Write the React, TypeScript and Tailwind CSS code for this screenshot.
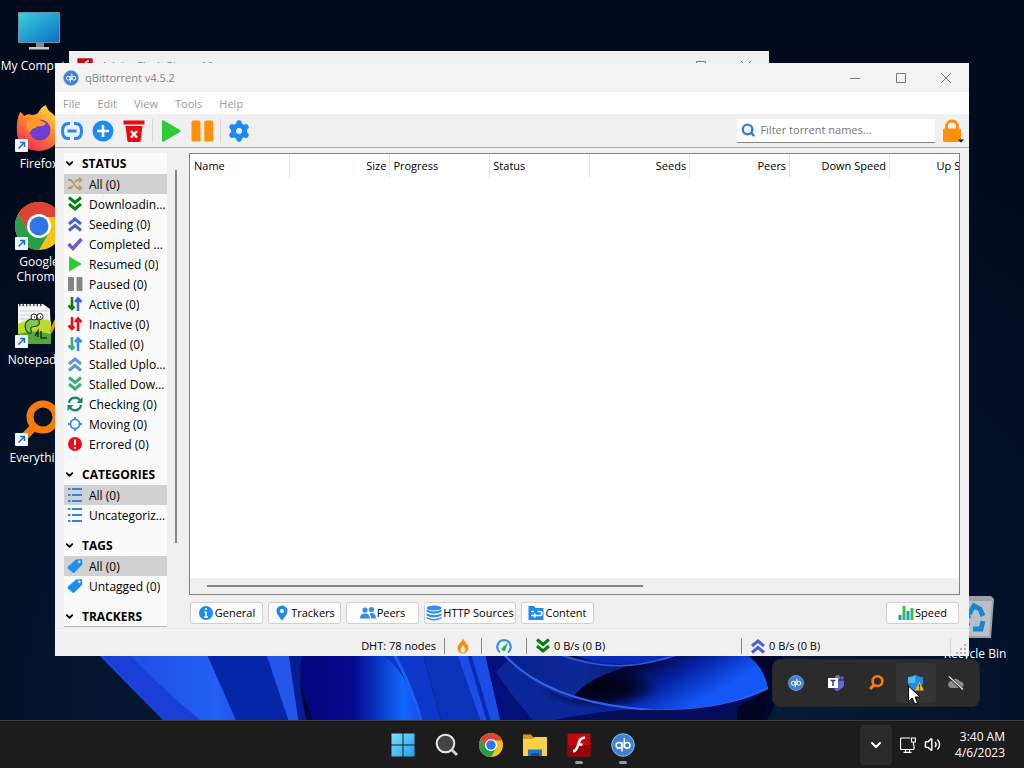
import type { ReactNode } from 'react';
import { ChevronDown, Search, Volume2 } from 'lucide-react';

interface IconProps {
  className?: string;
}

function ChevronsIcon({ className, up = false }: IconProps & { up?: boolean }) {
  return (
    <svg viewBox="0 0 16 16" className={className} fill="none" stroke="currentColor" strokeWidth="3">
      {up ? <path d="M2 8 8 3l6 5M2 14.500 8 9.500l6 5" /> : <path d="M2 1.500l6 5 6-5M2 8l6 5 6-5" />}
    </svg>
  );
}

function ArrowsIcon({ down, up }: { down: string; up: string }) {
  return (
    <svg viewBox="0 0 16 16" className="size-4" fill="none" strokeWidth="2.600">
      <path d="M5 1v12M1.500 9.500 5 13l2.500-2.500" className={down} />
      <path d="M11 15V3M8 6l3-3.500L14.500 6" className={up} />
    </svg>
  );
}

function ShuffleIcon() {
  return (
    <svg viewBox="0 0 16 16" className="size-4" fill="none" stroke="#bf9a62" strokeWidth="1.800">
      <path d="M1 4h3l6 8h4M1 12h3l2-2.500M8 6.500 10 4h4M12 1.500 14.500 4 12 6.500M12 9.500l2.500 2.500L12 14.500" />
    </svg>
  );
}

function CheckIcon() {
  return (
    <svg viewBox="0 0 16 16" className="size-4" fill="none" stroke="#7b55c7" strokeWidth="3.400">
      <path d="m1.500 8 4.500 4.500L14.500 3" />
    </svg>
  );
}

function PlayIcon({ className }: IconProps) {
  return (
    <svg viewBox="0 0 16 16" className={className} fill="#2fcb37">
      <path d="M2 1.500q0-1 1-.6l11 6.500q1 .6 0 1.200L3 15.100q-1 .4-1-.6z" />
    </svg>
  );
}

function PauseIcon({ className }: IconProps) {
  return (
    <svg viewBox="0 0 16 16" className={className} fill="currentColor">
      <rect x="1" y="1" width="6" height="14" rx="1" />
      <rect x="9.500" y="1" width="6" height="14" rx="1" />
    </svg>
  );
}

function RefreshIcon() {
  return (
    <svg viewBox="0 0 16 16" className="size-4" fill="none" stroke="#12876b" strokeWidth="2.200">
      <path d="M2 7a6 6 0 0 1 11-2.500M14 9a6 6 0 0 1-11 2.500" />
      <path d="M15.500 1v6h-6zM.5 15V9h6z" fill="#12876b" stroke="none" />
    </svg>
  );
}

function MovingIcon() {
  return (
    <svg viewBox="0 0 16 16" className="size-4" fill="none" stroke="#3b8ee0" strokeWidth="1.800">
      <circle cx="8" cy="8" r="4.600" />
      <path d="M8 1v3M8 12v3M1 8h3M12 8h3" />
    </svg>
  );
}

function ErrorIcon() {
  return (
    <svg viewBox="0 0 16 16" className="size-4">
      <circle cx="8" cy="8" r="7" fill="#ee0d14" />
      <path d="M8 3.500v5.500M8 10.700v2" stroke="white" strokeWidth="2" />
    </svg>
  );
}

function ListIcon() {
  return (
    <svg viewBox="0 0 16 16" className="size-4" stroke="#2f86dc" strokeWidth="2">
      <path d="M1 2h2.500M5 2h10M1 8h2.500M5 8h10M1 14h2.500M5 14h10" />
    </svg>
  );
}

function TagIcon() {
  return (
    <svg viewBox="0 0 16 16" className="size-4">
      <path d="m9 1.500 6-.5.3 5.500-7.800 8q-1 .8-2 0L1 10.500q-.8-1 0-2z" fill="#1e8ff0" />
      <circle cx="12.300" cy="3.800" r="1.200" fill="white" />
    </svg>
  );
}

function LinkIcon() {
  return (
    <svg viewBox="0 0 24 24" className="size-6" fill="none" stroke="#1b8bf5" strokeWidth="3">
      <path d="M10 4.500H8.500C4.500 4.500 2.500 7 2.500 12s2 7.500 6 7.500H10M14 4.500h1.500c4 0 6 2.500 6 7.500s-2 7.500-6 7.500H14M7.500 12h9" />
    </svg>
  );
}

function AddIcon() {
  return (
    <svg viewBox="0 0 24 24" className="size-6">
      <circle cx="12" cy="12" r="10.500" fill="#1b8bf5" />
      <path d="M12 6v12M6 12h12" stroke="white" strokeWidth="2.600" />
    </svg>
  );
}

function TrashIcon() {
  return (
    <svg viewBox="0 0 24 24" className="size-6">
      <path d="M1.500 1.500h21v4h-21zM3.500 7h17l-1.800 14.500q-.2 1.500-1.700 1.500H7q-1.500 0-1.700-1.500z" fill="#ea0a10" />
      <path d="m9 12 6 6.500M15 12l-6 6.500" stroke="white" strokeWidth="2.400" />
    </svg>
  );
}

function GearIcon() {
  return (
    <svg viewBox="0 0 24 24" className="size-6">
      <g stroke="#1b8bf5" strokeWidth="5.500" strokeLinecap="round">
        <path d="M12 4v16M5.100 8l13.800 8M5.100 16l13.800-8" />
      </g>
      <circle cx="12" cy="12" r="8" fill="#1b8bf5" />
      <circle cx="12" cy="12" r="3" fill="#f0f0f0" />
    </svg>
  );
}

function LockIcon() {
  return (
    <svg viewBox="0 0 24 24" className="size-6">
      <path d="M6.500 11V7.500a5.500 5.500 0 0 1 11 0V11" fill="none" stroke="#ff9009" strokeWidth="2.800" />
      <rect x="3" y="9.500" width="18" height="13.500" rx="1.500" fill="#ff9009" />
      <path d="M18 20.500h6l-3 3z" fill="black" />
    </svg>
  );
}

function InfoIcon() {
  return (
    <svg viewBox="0 0 16 16" className="size-4">
      <circle cx="8" cy="8" r="7" fill="#1e8bf0" />
      <path d="M8 3v2M6.500 7H8v5M6 12h4" stroke="white" strokeWidth="1.600" fill="none" />
    </svg>
  );
}

function PinIcon() {
  return (
    <svg viewBox="0 0 16 16" className="size-4">
      <path d="M8 15.500C4.500 11 2.500 8.500 2.500 6a5.500 5.500 0 0 1 11 0c0 2.500-2 5-5.500 9.500z" fill="#1e8bf0" />
      <circle cx="8" cy="6" r="2" fill="white" />
    </svg>
  );
}

function PeersIcon() {
  return (
    <svg viewBox="0 0 16 16" className="size-4" fill="#2f8ff0">
      <circle cx="5" cy="5" r="2.600" />
      <circle cx="11.500" cy="4.500" r="2.600" />
      <path d="M0 13.500c0-3 2-5 5-5s5 2 5 5zM11 13.500h5c0-3.500-1.500-5.500-5-5.500l-1.500.5q1.500 2 1.500 5z" />
    </svg>
  );
}

function DatabaseIcon() {
  return (
    <svg viewBox="0 0 16 16" className="size-4" fill="#2f8ff0">
      <ellipse cx="8" cy="3" rx="7.500" ry="2.500" />
      <path d="M.5 4.500Q8 8.500 15.500 4.500v2.300Q8 10.500.5 6.800zM.5 8.300q7.500 4 15 0v2.300q-7.500 3.700-15 0zM.5 12q7.500 4 15 0v1.500q-7.500 4-15 0z" />
    </svg>
  );
}

function ContentIcon() {
  return (
    <svg viewBox="0 0 16 16" className="size-4">
      <path d="M.5 1H6l1.500 2h8v12H.5z" fill="#1e8bf0" />
      <path d="M3 6.500h3M3 10.500h9a2 2 0 0 0 0-4H9.500M7.500 8.500l-2 2 2 2" fill="none" stroke="white" strokeWidth="1.300" />
    </svg>
  );
}

function SpeedIcon() {
  return (
    <svg viewBox="0 0 16 16" className="size-4">
      <path d="M2 10v5M10 6v9" stroke="#1c9ad8" strokeWidth="3" />
      <path d="M6 1v14M14 3v12" stroke="#35c04b" strokeWidth="3" />
    </svg>
  );
}

function FlameIcon() {
  return (
    <svg viewBox="0 0 16 16" className="size-4">
      <path d="M8 .5c1 3 5.500 5.500 5.500 9.500a5.500 5.500 0 0 1-11 0C2.500 6 7 4.500 8 .5z" fill="#f59013" />
      <path d="M8 7c.5 2 2.500 3 2.500 5a2.500 2.500 0 0 1-5 0c0-2 2-3 2.500-5z" fill="#fff3df" />
    </svg>
  );
}

function GaugeIcon() {
  return (
    <svg viewBox="0 0 16 16" className="size-4" fill="none">
      <path d="M4 14.500A7 7 0 0 1 8 2a7 7 0 0 1 4 12.500" stroke="#2f8ff0" strokeWidth="2.200" />
      <path d="M12 4 6.500 9.500a2 2 0 1 0 3 2.500z" fill="#35b062" />
    </svg>
  );
}

function QbIcon({ className }: IconProps) {
  return (
    <svg viewBox="0 0 24 24" className={className}>
      <circle cx="12" cy="12" r="11.300" fill="#3f82d0" stroke="#8dbdf0" strokeWidth="1" />
      <g fill="none" stroke="white" strokeWidth="1.500">
        <circle cx="8" cy="12.300" r="2.900" />
        <path d="M11 9v9.500M13.300 5.500V15" />
        <circle cx="16.200" cy="12.300" r="2.900" />
      </g>
    </svg>
  );
}

function FlashIcon({ className }: IconProps) {
  return (
    <svg viewBox="0 0 24 24" className={className}>
      <rect x="0.500" y="0.500" width="23" height="23" rx="1.500" fill="#c3090e" />
      <path d="M1 12h22v10q0 1-1 1H2q-1 0-1-1z" fill="#940508" />
      <path d="M18 4.500c-6 0-6 5.500-7.500 9-1 3-2 4.500-4.500 4.800M10.500 11.500h5" fill="none" stroke="white" strokeWidth="2.600" />
    </svg>
  );
}

function ChromeIcon({ className }: IconProps) {
  return (
    <svg viewBox="0 0 48 48" className={className}>
      <circle cx="24" cy="24" r="24" fill="#fbc116" />
      <path d="M3.200 12A24 24 0 0 1 44.800 12L46 15H24L13.600 30z" fill="#dd4437" />
      <path d="M3.200 12A24 24 0 0 0 24 48l10.400-18L24 34l-10.400-4z" fill="#2a9d4b" />
      <circle cx="24" cy="24" r="12" fill="white" />
      <circle cx="24" cy="24" r="9.500" fill="#2f76e6" />
    </svg>
  );
}

function MonitorIcon() {
  return (
    <svg viewBox="0 0 48 48" className="size-12">
      <defs>
        <linearGradient id="screen" x1="0" y1="0" x2="1" y2="1">
          <stop offset="0" stopColor="#37cfe0" />
          <stop offset="1" stopColor="#0e6fc2" />
        </linearGradient>
      </defs>
      <path d="M21 36h8v6h-8z" fill="#7d8890" />
      <rect x="3" y="6" width="42" height="31" rx="1" fill="#6f93a8" />
      <rect x="4" y="7" width="40" height="29" fill="url(#screen)" />
      <path d="M14 41h20v2.500H14z" fill="#c3c9cd" />
    </svg>
  );
}

function FirefoxIcon() {
  return (
    <svg viewBox="0 0 48 48" className="size-12">
      <defs>
        <linearGradient id="fox" x1="0.800" y1="0" x2="0.200" y2="1">
          <stop offset="0" stopColor="#ffe14a" />
          <stop offset="0.450" stopColor="#ff8a2a" />
          <stop offset="1" stopColor="#f0245a" />
        </linearGradient>
      </defs>
      <path d="M5 8q3 1 4 4 4-3 8-1 4 0 6-2 3-6 8-8 1 5 6 8 10 8 8 20-3 17-21 18Q4 46 2 30 1 16 5 8z" fill="url(#fox)" />
      <circle cx="25" cy="26" r="10.500" fill="#6b3fd0" />
      <path d="M13 17q3-4 7-1 5-2 6 1 3 1 5 2-2 4-8 3-2 2-6 3-2 5-4 2-3-5 0-10z" fill="#ff9a28" />
    </svg>
  );
}

function NotepadIcon() {
  return (
    <svg viewBox="0 0 48 48" className="size-12">
      <path d="M3 4h25l7 5 1 35H3z" fill="#f4f7f2" />
      <path d="M3 24q15-8 33-3v23H3z" fill="#b9dc2f" />
      <path d="M3 34q15-5 33 0v10H3z" fill="#53a83a" />
      <path d="M4 5h24" stroke="#454b63" strokeWidth="2.500" strokeDasharray="1.500 2" />
      <path d="M5 11h28M5 15h28M5 19h28" stroke="#b9c8d8" strokeWidth="0.800" />
      <path d="M11 30c-3-8 3-12 9-11 5 0 6 5 2 7-4 1-7 0-6 4s-2 5-5 0z" fill="#7ecb4f" stroke="#24451c" strokeWidth="1.200" />
      <circle cx="19" cy="17" r="3" fill="white" stroke="#222" />
      <circle cx="25" cy="16.500" r="3" fill="white" stroke="#222" />
      <path d="M19 17h1M25 17h1M20 36l3-5v6M26 31v7h6" stroke="#1c3016" strokeWidth="1.500" fill="none" />
      <path d="m34 31 9-18 3 1-9 19z" fill="#d9962c" />
    </svg>
  );
}

function EverythingIcon({ className }: IconProps) {
  return (
    <svg viewBox="0 0 48 48" className={className} fill="none" stroke="#fb7a0b">
      <circle cx="28" cy="19" r="13" strokeWidth="7" />
      <path d="M19 29 8 40" strokeWidth="8" />
    </svg>
  );
}

function RecycleIcon() {
  return (
    <svg viewBox="0 0 48 48" className="size-12">
      <path d="m4 5 8-3h28l3 3-3 39H9z" fill="#9ca2a8" />
      <path d="M6 7h35l-3 35H11z" fill="#b9bfc4" />
      <path d="m18 20 5-8 6 3 3 7M32 27l-2 8h-8M17 32l-3-8 5-3" fill="none" stroke="#1784d6" strokeWidth="5" />
    </svg>
  );
}

function ShortcutArrow() {
  return (
    <svg viewBox="0 0 13 13" className="absolute bottom-0 left-0 size-[13px]">
      <rect width="13" height="13" rx="1" fill="#f2f6fa" />
      <path d="M3.500 9.500 9 4M5 3.500h4.500V8" fill="none" stroke="#1c6fc0" strokeWidth="1.500" />
    </svg>
  );
}

function Wallpaper() {
  return (
    <svg viewBox="0 0 1024 768" preserveAspectRatio="xMidYMax slice" className="absolute inset-0 size-full">
      <defs>
        <radialGradient id="sky" cx="0.500" cy="0.900" r="0.800">
          <stop offset="0" stopColor="#0a2244" />
          <stop offset="0.600" stopColor="#03122a" />
          <stop offset="1" stopColor="#020b1c" />
        </radialGradient>
        <linearGradient id="petal" x1="0" y1="0" x2="1" y2="0">
          <stop offset="0" stopColor="#1b45dc" />
          <stop offset="0.600" stopColor="#2360f5" />
          <stop offset="1" stopColor="#0d35c5" />
        </linearGradient>
        <linearGradient id="fold" x1="0" y1="0" x2="1" y2="0">
          <stop offset="0" stopColor="#02057a" />
          <stop offset="0.450" stopColor="#020a90" />
          <stop offset="0.850" stopColor="#0f66fb" />
          <stop offset="1" stopColor="#1451ee" />
        </linearGradient>
        <linearGradient id="band" x1="0" y1="0" x2="1" y2="0">
          <stop offset="0" stopColor="#0a2bb8" />
          <stop offset="0.550" stopColor="#1238c4" />
          <stop offset="1" stopColor="#0a2490" />
        </linearGradient>
        <linearGradient id="sweep" gradientUnits="userSpaceOnUse" x1="650" y1="656" x2="682" y2="712">
          <stop offset="0" stopColor="#01052e" />
          <stop offset="0.450" stopColor="#0420a0" />
          <stop offset="1" stopColor="#1458f8" />
        </linearGradient>
        <radialGradient id="shade">
          <stop offset="0" stopColor="#00020f" />
          <stop offset="0.500" stopColor="#00031c" stopOpacity="0.850" />
          <stop offset="1" stopColor="#00031c" stopOpacity="0" />
        </radialGradient>
      </defs>
      <rect width="1024" height="768" fill="url(#sky)" />
      <path d="M98 650h684q4 40-20 80H174z" fill="#02062c" />
      <path d="M94 650h180l24 75H168z" fill="url(#petal)" />
      <path d="M205 650h68l24 75h-59z" fill="#0626a8" />
      <path d="M98 650h27q48 50 82 75h-39z" fill="#1a3fd6" />
      <path d="M265 650h24l11 75h-10z" fill="#2355e8" />
      <path d="M288 650h18q-12 25 2 75h-9z" fill="#061c94" />
      <path d="M304 650h72q35 20 44 75H315q-22-48-11-75z" fill="url(#fold)" />
      <path d="M376 650h46l20 75h-22q-5-50-44-75z" fill="#0b38c8" />
      <path d="M392 650q22 40 30 75" fill="none" stroke="#225cf0" strokeWidth="3" />
      <path d="M422 650h36l24 75h-40z" fill="#0734b8" />
      <path d="M456 650h28l18 75h-20z" fill="#1c4ce6" />
      <path d="m468 650 22 75" stroke="#0a2bb0" strokeWidth="4" />
      <path d="M485 650h20l32 75h-36z" fill="#03107c" />
      <path d="M496 672q20 30 42 53h10q60-20 120-14l-150-61z" fill="#0a2698" />
      <path d="M500 650h240q24 14 28 38-58 30-138 20-90-10-130-58z" fill="url(#sweep)" />
      <ellipse cx="600" cy="688" rx="60" ry="20" fill="url(#shade)" />
      <path d="M500 650h50q40 16 92 12-60 16-70 38-44-16-72-50z" fill="url(#band)" opacity="0.700" />
      <path d="M500 650q40 48 130 58 80 10 138-20" fill="none" stroke="#3560e8" strokeWidth="2" />
      <path d="M560 650q40 18 80 13 35-5 52-14z" fill="#0b2bb8" />
      <path d="M548 650q50 21 92 14 35-6 52-16" fill="none" stroke="#3357dc" strokeWidth="1.500" />
      <path d="M545 722q60-14 125-12 55-1 98-20 0 18-10 34z" fill="#030c58" />
      <path d="M738 706q14-6 30-16 0 18-10 34h-22z" fill="#010420" />
    </svg>
  );
}

interface DesktopIconProps {
  label: string;
  icon: ReactNode;
  shortcut?: boolean;
}

function DesktopIcon({ label, icon, shortcut = false }: DesktopIconProps) {
  return (
    <button className="flex h-[98px] w-[78px] flex-col items-center text-xs leading-[15px] text-white">
      <span className="relative mb-1 block size-12">
        {icon}
        {shortcut && <ShortcutArrow />}
      </span>
      <span className="w-full text-center text-shadow-xs">{label}</span>
    </button>
  );
}

function WindowControls() {
  return (
    <div className="flex text-[#777]">
      <button aria-label="Minimize" className="flex w-[46px] items-center justify-center">
        <svg viewBox="0 0 10 10" className="size-[10px]" stroke="currentColor"><path d="M0 5.500h10" /></svg>
      </button>
      <button aria-label="Maximize" className="flex w-[45px] items-center justify-center">
        <svg viewBox="0 0 10 10" className="size-[10px]" fill="none" stroke="currentColor"><path d="M.5.500h9v9h-9z" /></svg>
      </button>
      <button aria-label="Close" className="flex w-[46px] items-center justify-center">
        <svg viewBox="0 0 10 10" className="size-[10px]" stroke="currentColor"><path d="m0 0 10 10M10 0 0 10" /></svg>
      </button>
    </div>
  );
}

interface FilterItem {
  label: string;
  icon: ReactNode;
}

const statusFilters: FilterItem[] = [
  { label: 'All (0)', icon: <ShuffleIcon /> },
  { label: 'Downloading (0)', icon: <ChevronsIcon className="size-4 text-[#078010]" /> },
  { label: 'Seeding (0)', icon: <ChevronsIcon up className="size-4 text-[#4a62d0]" /> },
  { label: 'Completed (0)', icon: <CheckIcon /> },
  { label: 'Resumed (0)', icon: <PlayIcon className="size-4" /> },
  { label: 'Paused (0)', icon: <PauseIcon className="size-4 text-[#858585]" /> },
  { label: 'Active (0)', icon: <ArrowsIcon down="stroke-[#078010]" up="stroke-[#4a62d0]" /> },
  { label: 'Inactive (0)', icon: <ArrowsIcon down="stroke-[#ee0d14]" up="stroke-[#ee0d14]" /> },
  { label: 'Stalled (0)', icon: <ArrowsIcon down="stroke-[#3bac78]" up="stroke-[#2f8ff0]" /> },
  { label: 'Stalled Uploading (0)', icon: <ChevronsIcon up className="size-4 text-[#6590e8]" /> },
  { label: 'Stalled Downloading (0)', icon: <ChevronsIcon className="size-4 text-[#3bac78]" /> },
  { label: 'Checking (0)', icon: <RefreshIcon /> },
  { label: 'Moving (0)', icon: <MovingIcon /> },
  { label: 'Errored (0)', icon: <ErrorIcon /> },
];

const categoryFilters: FilterItem[] = [
  { label: 'All (0)', icon: <ListIcon /> },
  { label: 'Uncategorized (0)', icon: <ListIcon /> },
];

const tagFilters: FilterItem[] = [
  { label: 'All (0)', icon: <TagIcon /> },
  { label: 'Untagged (0)', icon: <TagIcon /> },
];

function FilterGroup({ title, items }: { title: string; items: FilterItem[] }) {
  return (
    <section className="mb-[10px]">
      <button className="flex h-[21px] w-full items-center gap-[7px] font-bold">
        <ChevronDown className="size-[11px]" strokeWidth={4} />
        {title}
      </button>
      <ul>
        {items.map((item, i) => (
          <li key={item.label}>
            <button
              className={`flex h-5 w-full items-center gap-[6px] pr-px pl-[3px] ${i === 0 ? 'bg-[#d1d1d1]' : ''}`}
            >
              <span className="shrink-0">{item.icon}</span>
              <span className="truncate pt-px">{item.label}</span>
            </button>
          </li>
        ))}
      </ul>
    </section>
  );
}

const columns = [
  { label: 'Name', numeric: false },
  { label: 'Size', numeric: true },
  { label: 'Progress', numeric: false },
  { label: 'Status', numeric: false },
  { label: 'Seeds', numeric: true },
  { label: 'Peers', numeric: true },
  { label: 'Down Speed', numeric: true },
  { label: 'Up Speed', numeric: true },
];

const tabs = [
  { label: 'General', icon: <InfoIcon />, width: 'w-[73px]' },
  { label: 'Trackers', icon: <PinIcon />, width: 'w-[73px]' },
  { label: 'Peers', icon: <PeersIcon />, width: 'w-[73px]' },
  { label: 'HTTP Sources', icon: <DatabaseIcon />, width: 'w-[92px]' },
  { label: 'Content', icon: <ContentIcon />, width: 'w-[73px]' },
];

function PanelButton({ label, icon, width }: { label: string; icon: ReactNode; width: string }) {
  return (
    <button
      className={`flex h-[22px] items-center justify-center gap-px rounded-[3px] border border-[#d0d0d0] bg-[#fdfdfd] whitespace-nowrap ${width}`}
    >
      <span className="shrink-0">{icon}</span>
      {label}
    </button>
  );
}

function Toolbar() {
  return (
    <div className="flex h-[34px] shrink-0 items-center border-b border-[#a8a8a8] bg-[#f0f0f0] pr-[5px] pl-[5px]">
      <div className="flex items-center gap-[7px]">
        <button aria-label="Add torrent link"><LinkIcon /></button>
        <button aria-label="Add torrent file"><AddIcon /></button>
        <button aria-label="Remove"><TrashIcon /></button>
      </div>
      <div className="ml-[6px] flex items-center gap-[7px] border-l border-[#d5d5d5] pl-[6px]">
        <button aria-label="Resume"><PlayIcon className="size-6" /></button>
        <button aria-label="Pause"><PauseIcon className="size-6 text-[#ff9009]" /></button>
      </div>
      <div className="ml-[6px] border-l border-[#d5d5d5] pl-[6px]">
        <button aria-label="Options" className="block"><GearIcon /></button>
      </div>
      <label className="ml-auto flex h-6 w-[198px] items-center gap-[5px] border-b border-[#868686] bg-white pl-1">
        <Search className="size-4 text-[#2b82ea]" strokeWidth={4} />
        <input
          type="text"
          aria-label="Filter torrent names"
          placeholder="Filter torrent names..."
          className="w-full min-w-0 bg-transparent outline-none placeholder:text-[#767676]"
        />
      </label>
      <button aria-label="Lock" className="ml-[5px]"><LockIcon /></button>
    </div>
  );
}

function TorrentTable() {
  return (
    <div className="flex min-h-0 flex-1 flex-col border border-[#828282] bg-white">
      <div className="min-h-0 flex-1 overflow-hidden">
        <table className="w-[800px] table-fixed">
          <thead>
            <tr className="h-6">
              {columns.map((col) => (
                <th
                  key={col.label}
                  className={`border-r border-[#e4e4e4] px-[3px] font-normal first:pl-1 ${col.numeric ? 'text-right' : 'text-left'}`}
                >
                  {col.label}
                </th>
              ))}
            </tr>
          </thead>
        </table>
      </div>
      <div className="flex h-4 items-center bg-[#f0f0f0] pl-[17px]">
        <div className="h-[2px] w-[58%] bg-[#868686]" />
      </div>
    </div>
  );
}

function StatusBar() {
  return (
    <footer className="flex h-[26px] shrink-0 items-center border-t border-[#fafafa] pt-1">
      <div className="flex flex-1 items-center justify-end">
        <span className="pr-2">DHT: 78 nodes</span>
        <button aria-label="Connection status" className="flex w-[37px] justify-center border-l border-[#8c8c8c]"><FlameIcon /></button>
        <button aria-label="Alternative speed limits" className="flex w-[45px] justify-center border-l border-[#8c8c8c]"><GaugeIcon /></button>
        <button className="flex w-[215px] items-center gap-[3px] border-l border-[#8c8c8c] pl-2">
          <ChevronsIcon className="size-4 text-[#078010]" />
          0 B/s (0 B)
        </button>
      </div>
      <button className="flex w-[210px] items-center gap-[3px] border-x border-l-[#8c8c8c] border-r-[#d5d5d5] pl-2">
        <ChevronsIcon up className="size-4 text-[#4a62d0]" />
        0 B/s (0 B)
      </button>
      <svg viewBox="0 0 18 18" className="size-[18px] self-end" fill="#b4b4b4">
        <path d="M13 6h2v2h-2zM9 10h2v2H9zM13 10h2v2h-2zM5 14h2v2H5zM9 14h2v2H9zM13 14h2v2h-2z" />
      </svg>
    </footer>
  );
}

function TorrentWindow() {
  return (
    <main className="absolute top-[63px] right-[55px] bottom-[112px] left-[55px] flex flex-col overflow-hidden bg-[#f0f0f0] text-[11px] leading-4 text-black">
      <header className="flex h-[29px] shrink-0 justify-between bg-[#f3f3f3]">
        <h1 className="flex items-center gap-[6px] pl-2 text-[#858585]">
          <QbIcon className="size-4" />
          qBittorrent v4.5.2
        </h1>
        <WindowControls />
      </header>
      <nav className="flex h-[22px] shrink-0 items-center gap-[17px] bg-white pt-px pl-2 text-[#999]">
        <button>File</button>
        <button>Edit</button>
        <button>View</button>
        <button>Tools</button>
        <button>Help</button>
      </nav>
      <Toolbar />
      <div className="flex min-h-0 flex-1 pt-[5px] pr-[9px] pl-[9px]">
        <aside className="flex w-[113px] shrink-0 text-xs">
          <div className="mb-[3px] w-[103px] overflow-hidden border-b border-[#b4b4b4] bg-[#fafafa]">
            <FilterGroup title="STATUS" items={statusFilters} />
            <FilterGroup title="CATEGORIES" items={categoryFilters} />
            <FilterGroup title="TAGS" items={tagFilters} />
            <FilterGroup title="TRACKERS" items={[]} />
          </div>
          <div className="flex-1 pt-[17px] pl-2">
            <div className="h-[81%] w-[2px] bg-[#868686]" />
          </div>
        </aside>
        <div className="ml-3 flex min-w-0 flex-1 flex-col">
          <TorrentTable />
          <div className="flex gap-[5px] pt-[7px] pr-px pb-[6px] pl-px">
            {tabs.map((tab) => (
              <PanelButton key={tab.label} {...tab} />
            ))}
            <div className="ml-auto">
              <PanelButton label="Speed" icon={<SpeedIcon />} width="w-[73px]" />
            </div>
          </div>
        </div>
      </div>
      <StatusBar />
    </main>
  );
}

function TeamsIcon() {
  return (
    <svg viewBox="0 0 16 16" className="size-4">
      <circle cx="9.500" cy="2.500" r="2.500" fill="#6d73d8" />
      <circle cx="14" cy="3" r="1.800" fill="#565cc0" />
      <path d="M6 5.500h10v5q-1 3-3 3-2 2.500-4.500 2.500Q6 15 6 12z" fill="#6066ce" />
      <rect y="3" width="10" height="10" rx="0.500" fill="white" />
      <path d="M2.500 5.500h5M5 5.500v5.500" stroke="#343a88" strokeWidth="1.500" />
    </svg>
  );
}

function ShieldIcon() {
  return (
    <svg viewBox="0 0 16 16" className="size-4">
      <path d="M7.500 0Q11 2.500 15 2v6q-1 5-7.500 8Q1 13 0 8V2q4 .5 7.500-2z" fill="#1a8ee0" />
      <path d="M7.500 0v8H0V2q4 .5 7.500-2z" fill="#4fb9f0" />
      <path d="m11.500 6.500 4.500 9H7z" fill="#f7b533" />
      <path d="M11.500 9.500v3M11.500 13.300v1.200" stroke="#222" strokeWidth="1.200" />
    </svg>
  );
}

function CloudOffIcon() {
  return (
    <svg viewBox="0 0 16 16" className="size-4">
      <path d="M4 13a3.500 3.500 0 0 1-.5-7A5 5 0 0 1 12 6.500a3.300 3.300 0 0 1 1 6.500z" fill="#8d8d8d" />
      <path d="m1 1.500 13.500 13" stroke="#2b2b2b" strokeWidth="3" />
      <path d="m1 1.500 14 13" stroke="#e4e4e4" strokeWidth="1.200" />
    </svg>
  );
}

const trayIcons = [
  { label: 'qBittorrent', icon: <QbIcon className="size-4" /> },
  { label: 'Teams', icon: <TeamsIcon /> },
  { label: 'Everything', icon: <EverythingIcon className="size-[18px]" /> },
  { label: 'Windows Security', icon: <ShieldIcon /> },
  { label: 'OneDrive', icon: <CloudOffIcon /> },
];

function TrayFlyout() {
  return (
    <div className="absolute right-11 bottom-[61px] flex rounded-lg border border-[#252525] bg-[#2b2b2b] px-[3px] py-[3px]">
      {trayIcons.map((item) => (
        <button
          key={item.label}
          aria-label={item.label}
          className={`flex size-10 items-center justify-center rounded ${item.label === 'Windows Security' ? 'bg-[#343434]' : ''}`}
        >
          {item.icon}
        </button>
      ))}
      <svg viewBox="0 0 14 20" className="absolute top-[25px] left-[134px] h-5 w-[14px]">
        <path d="M1.500 1v15.500l3.700-3.500 2.600 6 2.700-1.200L8 12h5z" fill="white" stroke="black" />
      </svg>
    </div>
  );
}

function StartIcon() {
  return (
    <svg viewBox="0 0 24 24" className="size-6">
      <defs>
        <linearGradient id="start" x1="0" y1="0" x2="1" y2="1">
          <stop offset="0" stopColor="#7fe0fc" />
          <stop offset="1" stopColor="#1f9ff0" />
        </linearGradient>
      </defs>
      <path d="M.5.500h11v11H.5zM12.500.500h11v11h-11zM.5 12.500h11v11H.5zM12.500 12.500h11v11h-11z" fill="url(#start)" />
    </svg>
  );
}

function SearchIcon() {
  return (
    <svg viewBox="0 0 24 24" className="size-6">
      <path d="m16.500 16.500 5.500 5.500" stroke="#d5d5d5" strokeWidth="2.800" />
      <circle cx="10.500" cy="10.500" r="8.800" fill="#444" stroke="#e8e8e8" strokeWidth="2" />
    </svg>
  );
}

function FolderIcon() {
  return (
    <svg viewBox="0 0 24 24" className="size-6">
      <path d="M0 1.500h8l2 2.500h14v5H0z" fill="#d79a18" />
      <path d="M0 6h10l2-2h12v19H0z" fill="#fccf4a" />
      <path d="M5 16.500h14V23H5z" fill="#1b75c8" />
      <path d="M8 20h8v3H8z" fill="#124f93" />
    </svg>
  );
}

const taskbarApps = [
  { label: 'Start', icon: <StartIcon />, running: false },
  { label: 'Search', icon: <SearchIcon />, running: false },
  { label: 'Google Chrome', icon: <ChromeIcon className="size-6" />, running: false },
  { label: 'File Explorer', icon: <FolderIcon />, running: false },
  { label: 'Adobe Flash Player', icon: <FlashIcon className="size-6" />, running: true },
  { label: 'qBittorrent', icon: <QbIcon className="size-6" />, running: true },
];

function Taskbar() {
  return (
    <footer className="absolute inset-x-0 bottom-0 grid h-12 grid-cols-[1fr_auto_1fr] items-center border-t border-[#3b3d42] bg-[#1c1c1c] text-white">
      <div className="col-start-2 flex pl-[2px]">
        {taskbarApps.map((app) => (
          <button key={app.label} aria-label={app.label} className="relative flex h-[46px] w-11 items-center justify-center">
            {app.icon}
            {app.running && <span className="absolute bottom-1 h-[3px] w-2 rounded-full bg-[#9a9a9a]" />}
          </button>
        ))}
      </div>
      <div className="flex items-center justify-end pr-[19px]">
        <button aria-label="Show hidden icons" className="mr-2 flex h-10 w-8 items-center justify-center rounded bg-[#2b2b2b]">
          <ChevronDown className="size-4" strokeWidth={3} />
        </button>
        <button aria-label="Network and volume" className="mr-[14px] flex items-center gap-2">
          <svg viewBox="0 0 16 16" className="size-4" fill="none" stroke="white" strokeWidth="1.200">
            <path d="M10 1H1.500q-1 0-1 1v9.500q0 1 1 1H13q1 0 1-1V8M5.500 12.500V15M9.500 12.500V15M3.500 15.300h8M11.500 1h4v4h-4zM13.500 5v3" />
          </svg>
          <Volume2 className="size-[17px]" strokeWidth={2} />
        </button>
        <button className="text-right text-xs leading-4">
          <span className="block">3:40 AM</span>
          <span className="block">4/6/2023</span>
        </button>
      </div>
    </footer>
  );
}

export default function App() {
  return (
    <div className="relative h-screen min-h-[480px] w-full overflow-hidden bg-[#020b1c] font-['Open_Sans','Noto_Sans',sans-serif]">
      <Wallpaper />
      <div className="absolute top-[6px] left-0 flex flex-col">
        <DesktopIcon label="My Computer" icon={<MonitorIcon />} />
        <DesktopIcon label="Firefox" icon={<FirefoxIcon />} shortcut />
        <DesktopIcon label="Google Chrome" icon={<ChromeIcon className="size-12" />} shortcut />
        <DesktopIcon label="Notepad++" icon={<NotepadIcon />} shortcut />
        <DesktopIcon label="Everything" icon={<EverythingIcon className="size-12" />} shortcut />
      </div>
      <div className="absolute right-[10px] bottom-[76px]">
        <DesktopIcon label="Recycle Bin" icon={<RecycleIcon />} />
      </div>
      <div className="absolute top-[51px] right-[255px] left-[69px] flex h-[30px] justify-between bg-[#f0f0f0] text-[11px] text-[#858585]">
        <h2 className="flex items-center gap-2 pl-2">
          <FlashIcon className="size-4" />
          Adobe Flash Player 10
        </h2>
        <WindowControls />
      </div>
      <TorrentWindow />
      <TrayFlyout />
      <Taskbar />
    </div>
  );
}
